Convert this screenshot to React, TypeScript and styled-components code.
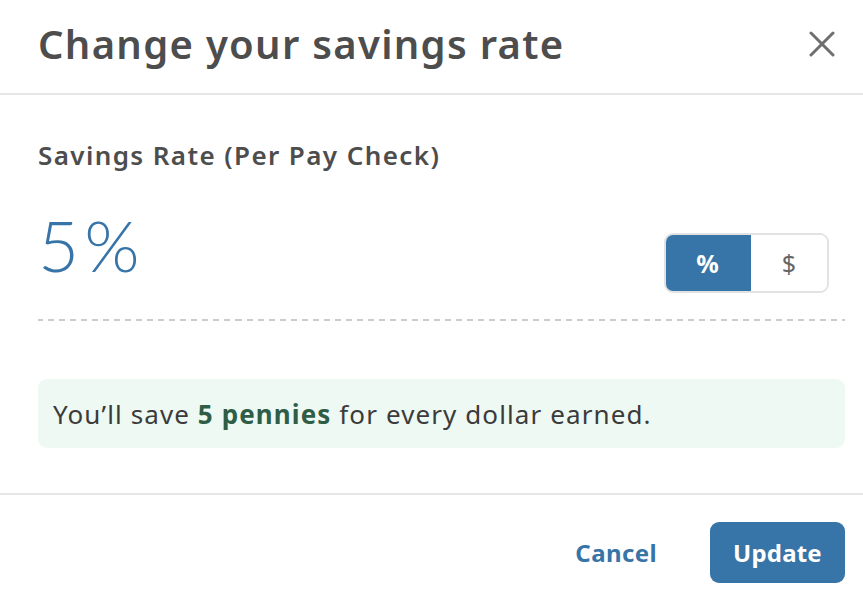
import { useState } from 'react'
import styled, { createGlobalStyle } from 'styled-components'

const Global = createGlobalStyle`
  html, body {
    margin: 0;
    padding: 0;
    background: #ffffff;
  }
  body {
    font-family: 'Noto Sans', Lato, sans-serif;
  }
  * {
    box-sizing: border-box;
  }
`

const Blue = '#3774a7'

const Modal = styled.div`
  width: 863px;
  height: 606px;
  display: flex;
  flex-direction: column;
  background: #ffffff;
`

const Header = styled.div`
  height: 95px;
  display: flex;
  align-items: center;
  justify-content: space-between;
  padding: 0 26px 6px 38px;
  border-bottom: 2px solid #e6e6e6;
`

const Title = styled.h1`
  margin: 0;
  font-family: 'Noto Sans', 'Open Sans', sans-serif;
  font-weight: 600;
  font-size: 40px;
  letter-spacing: 1.3px;
  color: #4d4d4d;
`

const CloseButton = styled.button`
  border: none;
  background: none;
  padding: 0;
  width: 30px;
  height: 30px;
  display: flex;
  align-items: center;
  justify-content: center;
  cursor: pointer;
`

const Body = styled.div`
  padding: 44px 18px 0 38px;
  display: flex;
  flex-direction: column;
`

const Label = styled.div`
  font-weight: 600;
  font-size: 26px;
  line-height: 32px;
  letter-spacing: 1.4px;
  color: #4d4d4d;
`

const RateRow = styled.div`
  display: flex;
  justify-content: space-between;
  align-items: flex-start;
  margin-top: 38px;
  padding: 0 16px 26px 0;
  border-bottom: 2px dashed #cfcfcf;
  border-image: repeating-linear-gradient(
      to right,
      #cccccc 0 6px,
      transparent 6px 11px
    )
    1;
`

const RateValue = styled.div`
  font-family: Lato, sans-serif;
  font-weight: 300;
  font-size: 71px;
  line-height: 72px;
  letter-spacing: 5px;
  color: ${Blue};
`

const Toggle = styled.div`
  display: flex;
  margin-top: 24px;
  height: 60px;
  border-radius: 9px;
  overflow: hidden;
  border: 2px solid #e2e2e2;
`

const ToggleOption = styled.button<{ $active: boolean }>`
  border: none;
  margin: ${(p) => (p.$active ? '-2px 0 -2px -2px' : '0')};
  width: ${(p) => (p.$active ? '87px' : '76px')};
  background: ${(p) => (p.$active ? Blue : '#ffffff')};
  color: ${(p) => (p.$active ? '#ffffff' : '#666666')};
  font-family: 'Noto Sans', sans-serif;
  font-weight: ${(p) => (p.$active ? 700 : 400)};
  font-size: 25px;
  cursor: pointer;
`

const Notice = styled.div`
  margin-top: 58px;
  height: 69px;
  display: flex;
  align-items: center;
  padding: 0 15px;
  border-radius: 9px;
  background: #eef9f3;
  font-size: 26px;
  letter-spacing: 1.1px;
  color: #3b3b3b;
`

const Highlight = styled.strong`
  font-weight: 700;
  color: #2f5d45;
`

const Footer = styled.div`
  margin-top: 45px;
  border-top: 2px solid #e6e6e6;
  display: flex;
  justify-content: flex-end;
  align-items: center;
  gap: 53px;
  padding: 27px 18px 0 0;
`

const TextButton = styled.button`
  border: none;
  background: none;
  padding: 0;
  font-family: 'Noto Sans', sans-serif;
  font-weight: 700;
  font-size: 24px;
  letter-spacing: 0.4px;
  color: ${Blue};
  cursor: pointer;
`

const PrimaryButton = styled.button`
  border: none;
  width: 135px;
  height: 61px;
  border-radius: 9px;
  background: ${Blue};
  color: #ffffff;
  font-family: 'Noto Sans', sans-serif;
  font-weight: 700;
  font-size: 24px;
  letter-spacing: 0.2px;
  cursor: pointer;
`

const CloseIcon = () => (
  <svg width="26" height="26" viewBox="0 0 26 26" fill="none">
    <path
      d="M2 2 L24 24 M24 2 L2 24"
      stroke="#6f6f6f"
      strokeWidth="3"
      strokeLinecap="round"
    />
  </svg>
)

const App = () => {
  const [mode, setMode] = useState<'percent' | 'dollar'>('percent')

  return (
    <>
      <Global />
      <Modal>
        <Header>
          <Title>Change your savings rate</Title>
          <CloseButton aria-label="Close">
            <CloseIcon />
          </CloseButton>
        </Header>
        <Body>
          <Label>Savings Rate (Per Pay Check)</Label>
          <RateRow>
            <RateValue>5%</RateValue>
            <Toggle>
              <ToggleOption
                $active={mode === 'percent'}
                onClick={() => setMode('percent')}
              >
                %
              </ToggleOption>
              <ToggleOption
                $active={mode === 'dollar'}
                onClick={() => setMode('dollar')}
              >
                $
              </ToggleOption>
            </Toggle>
          </RateRow>
          <Notice>
            <span>
              You’ll save <Highlight>5 pennies</Highlight> for every dollar
              earned.
            </span>
          </Notice>
        </Body>
        <Footer>
          <TextButton>Cancel</TextButton>
          <PrimaryButton>Update</PrimaryButton>
        </Footer>
      </Modal>
    </>
  )
}

export default App
